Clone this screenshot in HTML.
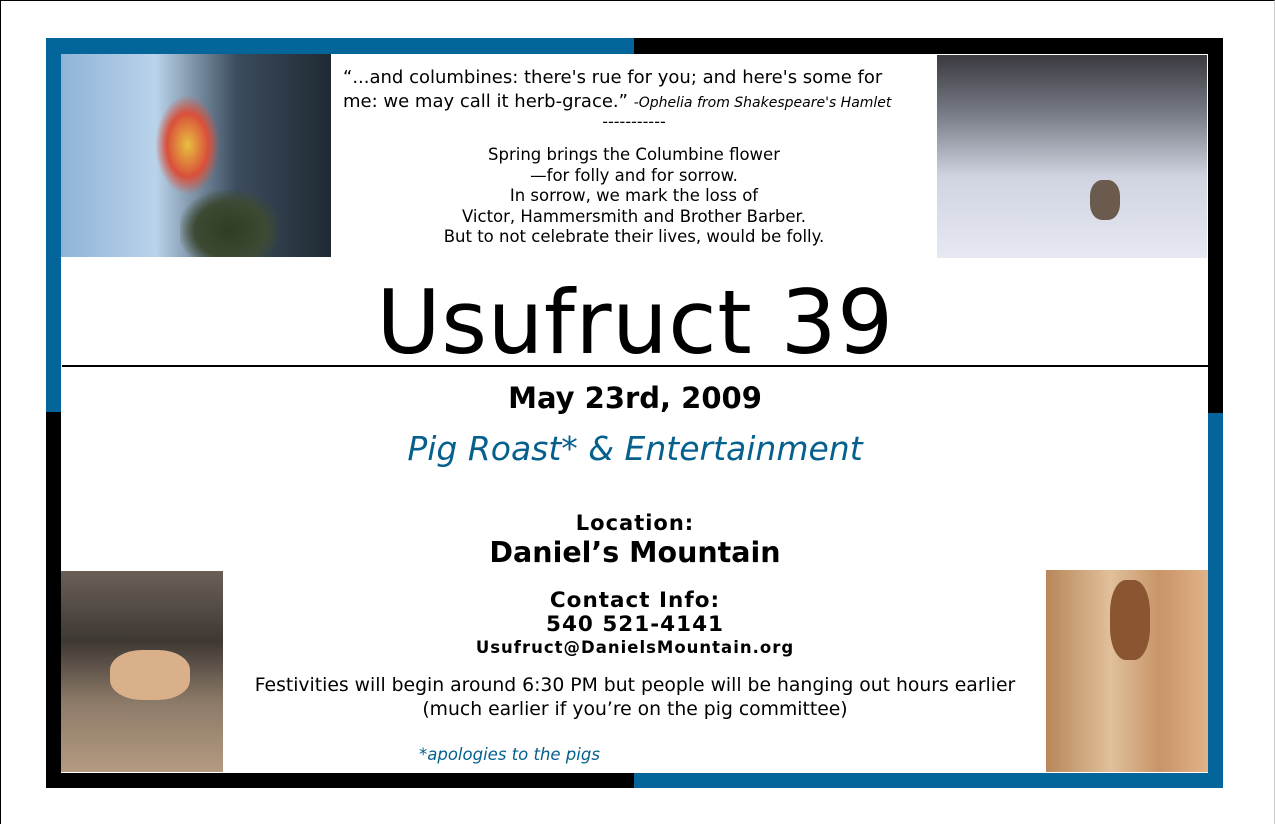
<!DOCTYPE html>
<html><head><meta charset="utf-8"><style>
body{margin:0;width:1275px;height:825px;background:#fff;position:relative;overflow:hidden;font-family:"DejaVu Sans","Liberation Sans",sans-serif;color:#000}
.a{position:absolute}
.c{position:absolute;left:62px;width:1146px;text-align:center;white-space:nowrap}
</style></head><body>
<div class="a" style="left:0;top:0;width:1273px;height:823px;border-top:1px solid #000;border-left:1px solid #000;border-right:1px solid #ccc"></div>
<div class="a" style="left:46px;top:38px;width:588px;height:16px;background:#04659b"></div>
<div class="a" style="left:634px;top:38px;width:589px;height:16px;background:#000"></div>
<div class="a" style="left:46px;top:38px;width:15px;height:374px;background:#04659b"></div>
<div class="a" style="left:46px;top:412px;width:15px;height:376px;background:#000"></div>
<div class="a" style="left:1208px;top:38px;width:15px;height:375px;background:#000"></div>
<div class="a" style="left:1208px;top:413px;width:15px;height:375px;background:#04659b"></div>
<div class="a" style="left:46px;top:773px;width:588px;height:15px;background:#000"></div>
<div class="a" style="left:634px;top:773px;width:589px;height:15px;background:#04659b"></div>
<div class="a" style="left:61px;top:54px;width:270px;height:203px;background:linear-gradient(90deg,#8fb3d8 0%,#b9d3ea 35%,#3c4c5e 65%,#1f2a33 100%)"></div>
<div class="a" style="left:155px;top:95px;width:65px;height:100px;background:radial-gradient(ellipse at 50% 50%,#e8c040 0%,#d9503a 45%,transparent 70%)"></div>
<div class="a" style="left:180px;top:190px;width:100px;height:67px;background:radial-gradient(ellipse at 50% 60%,#2f3d25 0%,#3d4a33 50%,transparent 75%)"></div>
<div class="a" style="left:937px;top:55px;width:270px;height:203px;background:linear-gradient(180deg,#3a3a40 0%,#7a7e88 30%,#d0d4e0 60%,#e6e8f2 100%)"></div>
<div class="a" style="left:1090px;top:180px;width:30px;height:40px;background:#6b5a4e;border-radius:40%"></div>
<div class="a" style="left:61px;top:571px;width:162px;height:201px;background:linear-gradient(180deg,#6a6058 0%,#3e3833 35%,#8c7a68 65%,#b49a80 100%)"></div>
<div class="a" style="left:110px;top:650px;width:80px;height:50px;background:#d9b08a;border-radius:40%"></div>
<div class="a" style="left:1046px;top:570px;width:162px;height:202px;background:linear-gradient(90deg,#b8865a 0%,#e0c09a 40%,#c89468 70%,#e2b288 100%)"></div>
<div class="a" style="left:1110px;top:580px;width:40px;height:80px;background:#8a5530;border-radius:40%"></div>
<div class="a" style="left:343px;top:66px;width:580px;font-size:18px;line-height:24px">“...and columbines: there's rue for you; and here's some for<br>me: we may call it herb-grace.” <i style="font-size:14px">-Ophelia from Shakespeare's Hamlet</i></div>
<div class="a" style="left:331px;top:112px;width:606px;text-align:center;font-size:16px">-----------</div>
<div class="a" style="left:331px;top:145px;width:606px;text-align:center;font-size:16.5px;line-height:20.5px;white-space:nowrap">Spring brings the Columbine flower<br>—for folly and for sorrow.<br>In sorrow, we mark the loss of<br>Victor, Hammersmith and Brother Barber.<br>But to not celebrate their lives, would be folly.</div>
<div class="c" style="top:271px;font-size:88px;line-height:104px;letter-spacing:0.5px">Usufruct 39</div>
<div class="a" style="left:62px;top:365px;width:1146px;height:2px;background:#000"></div>
<div class="c" style="top:381px;font-size:29px;font-weight:bold">May 23rd, 2009</div>
<div class="c" style="top:429px;font-size:33px;font-style:italic;color:#06608e">Pig Roast* &amp; Entertainment</div>
<div class="c" style="top:511px;font-size:21px;font-weight:bold;letter-spacing:1px">Location:</div>
<div class="c" style="top:536px;font-size:28.5px;font-weight:bold">Daniel’s Mountain</div>
<div class="c" style="top:588px;font-size:21.5px;font-weight:bold;letter-spacing:1px">Contact Info:</div>
<div class="c" style="top:612px;font-size:21.5px;font-weight:bold;letter-spacing:1px">540 521-4141</div>
<div class="c" style="top:638px;font-size:16.5px;font-weight:bold;letter-spacing:1px">Usufruct@DanielsMountain.org</div>
<div class="c" style="top:674px;font-size:18.8px;line-height:24px">Festivities will begin around 6:30 PM but people will be hanging out hours earlier<br>(much earlier if you’re on the pig committee)</div>
<div class="a" style="left:419px;top:745px;font-size:16.5px;font-style:italic;color:#06608e">*apologies to the pigs</div>
</body></html>
